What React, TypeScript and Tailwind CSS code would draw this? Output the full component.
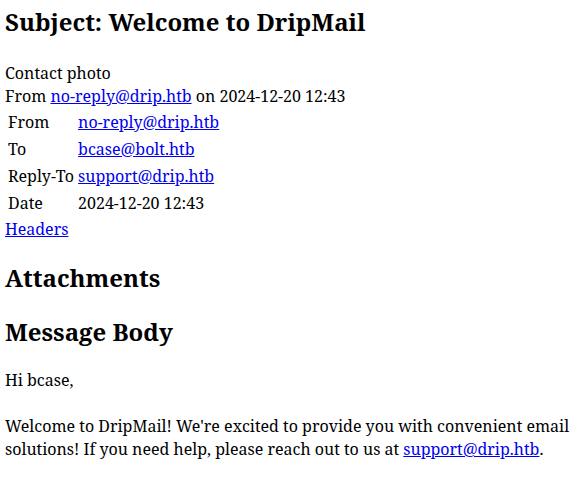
export default function App() {
  return (
    <div className="p-[5px] font-['Noto_Serif',serif] text-[16px] leading-[23px] text-black bg-white">
      <h2 className="text-[24px] leading-[34.3px] font-bold mt-0 mb-[22.5px]">Subject: Welcome to DripMail</h2>
      <div>Contact photo</div>
      <div>
        From <a href="#" className="text-[#0000ee] underline">no-reply@drip.htb</a> on 2024-12-20 12:43
      </div>
      <table className="border-separate border-spacing-[2px]">
        <tbody>
          <tr>
            <td className="p-[1px] pr-[2px]">From</td>
            <td className="p-[1px]"><a href="#" className="text-[#0000ee] underline">no-reply@drip.htb</a></td>
          </tr>
          <tr>
            <td className="p-[1px]">To</td>
            <td className="p-[1px]"><a href="#" className="text-[#0000ee] underline">bcase@bolt.htb</a></td>
          </tr>
          <tr>
            <td className="p-[1px]">Reply-To</td>
            <td className="p-[1px]"><a href="#" className="text-[#0000ee] underline">support@drip.htb</a></td>
          </tr>
          <tr>
            <td className="p-[1px]">Date</td>
            <td className="p-[1px]">2024-12-20 12:43</td>
          </tr>
        </tbody>
      </table>
      <a href="#" className="text-[#0000ee] underline">Headers</a>
      <h2 className="text-[24px] leading-[34.3px] font-bold my-[19.92px]">Attachments</h2>
      <h2 className="text-[24px] leading-[34.3px] font-bold my-[19.92px]">Message Body</h2>
      <p className="my-[16px]">Hi bcase,<br /><br />Welcome to DripMail! We're excited to provide you with convenient email solutions! If you need help, please reach out to us at <a href="#" className="text-[#0000ee] underline">support@drip.htb</a>.</p>
    </div>
  );
}
